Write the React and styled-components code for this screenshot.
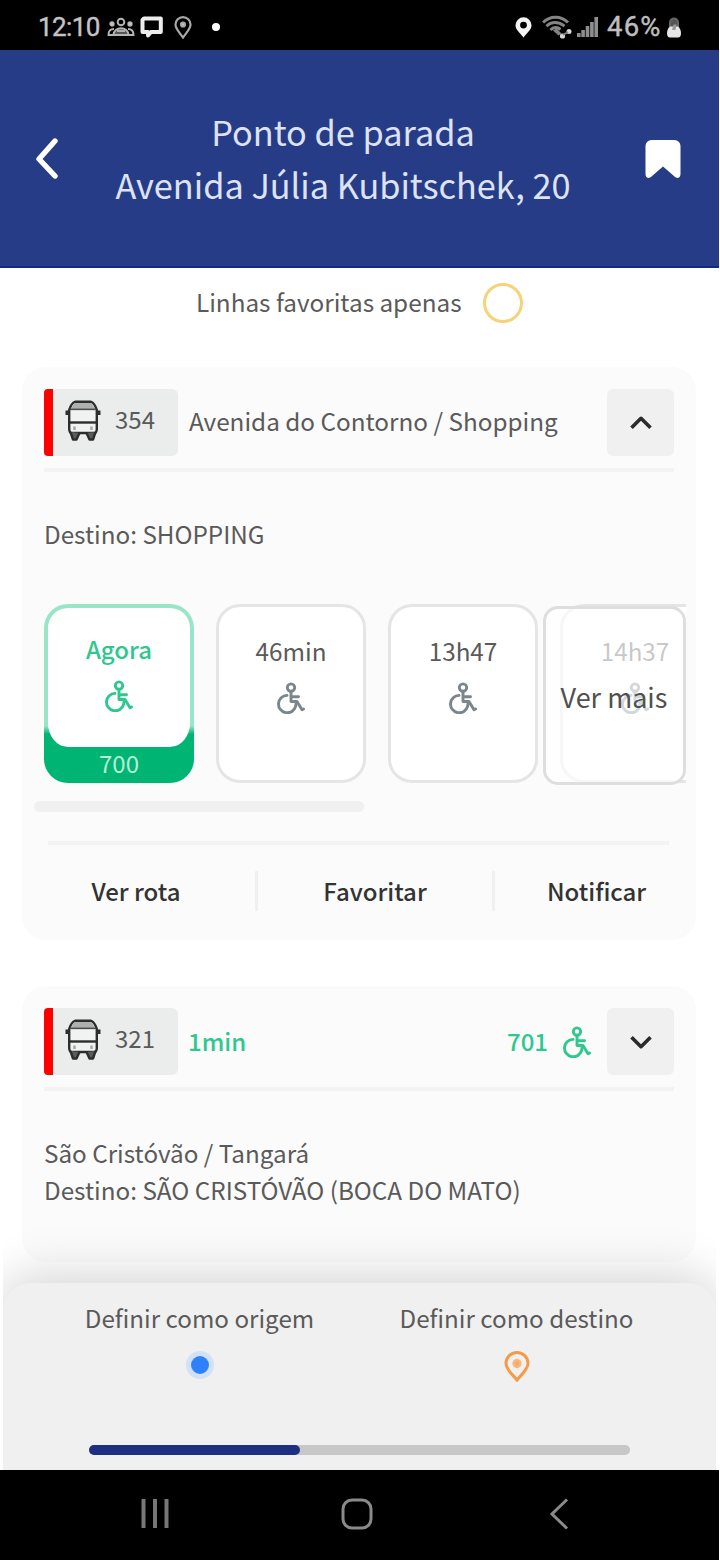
import React, { useState } from 'react'
import styled, { createGlobalStyle } from 'styled-components'

const green = "#2fc78f";

function WheelchairIcon({ color }) {
  return (
    <svg width="30" height="32" viewBox="0 0 30 32" fill="none" stroke={color} strokeWidth="2.900" strokeLinecap="round" strokeLinejoin="round">
      <circle cx="15" cy="5.600" r="3.700" />
      <path d="M15 9.500v10h6l5 8.300 1.600-.8" />
      <path d="M15.500 14.800h7" />
      <path d="M11 13.400a8.700 8.700 0 1 0 8.600 11l.6-3.400" />
    </svg>
  )
}

function BusIcon() {
  return (
    <svg width="36" height="42" viewBox="0 0 36 42" fill="none" stroke="#2c2e2e" strokeWidth="2.400" strokeLinejoin="round">
      <path d="M10 1.800h16c3 1 4.500 4 5.800 8V29c0 2-1 4-2 4H6.200c-1 0-2-2-2-4V9.800C5.500 5.800 7 2.800 10 1.800z" fill="#f1f3f2" />
      <path d="M10 3h16c1.500 1 2.800 3.500 3.500 5.500h-23C7.200 6.500 8.500 4 10 3z" fill="#adb0af" stroke="none" />
      <path d="M5 9.300h26" strokeWidth="1.700" stroke="#4a4c4c" />
      <path d="M4.200 22.500h27.600" />
      <path d="M2 10.500v4.500M34 10.500v4.500" strokeWidth="3" />
      <path d="M9.500 26.500v3.500M26.500 26.500v3.500" stroke="#a2a5a4" strokeWidth="2.400" />
      <path d="M5.500 32l2.500 7.500h3.500l3-6.500M30.500 32L28 39.500h-3.500l-3-6.500" fill="#5a5d5c" />
    </svg>
  )
}

function Chevron({ up }) {
  return (
    <svg width="24" height="16" viewBox="0 0 24 16" fill="none" stroke="#2b2b2b" strokeWidth="3.600" strokeLinejoin="round">
      <path d={up ? "M2.500 12.700L12 3.300l9.500 9.400" : "M2.500 3.300L12 12.700l9.500-9.400"} />
    </svg>
  )
}

function PeopleIcon() {
  return (
    <svg width="28" height="20" viewBox="0 0 28 20" fill="none" stroke="#b5b5b5" strokeWidth="1.900">
      <circle cx="14" cy="5" r="3.300" />
      <path d="M6.500 18c0-9 15-9 15 0z" fill="#555" />
      <path d="M10 14h8" />
      <circle cx="5" cy="7" r="1.700" fill="#ddd" />
      <circle cx="23" cy="7" r="1.700" fill="#ddd" />
      <path d="M7 12c-4 0-5.500 2-5.500 6H8M21 12c4 0 5.500 2 5.500 6H20" />
    </svg>
  )
}

function ChatIcon() {
  return (
    <svg width="23" height="23" viewBox="0 0 23 23">
      <path d="M4 2.500H20.800V16H11L8 19.500V16H2.500V4z" fill="none" stroke="#ededed" strokeWidth="4" strokeLinejoin="round" />
    </svg>
  )
}

function StatusWifi() {
  return (
    <svg width="30" height="24" viewBox="0 0 30 24" fill="none" stroke="#858585" strokeWidth="3">
      <path d="M1 7.500C8 .5 19 .5 26 7.500M4.500 11.200c5-5 12-5 18 0M8.500 15c3-3.200 7-3 10-.5" />
      <path d="M11 15.500l3.500-2 5 5-3 2z" fill="#858585" stroke="none" />
      <circle cx="20.500" cy="21" r="2.600" fill="#d8d8d8" stroke="none" />
      <circle cx="27" cy="16.500" r="2.500" fill="#d8d8d8" stroke="none" />
      <path d="M21 20l5-3" strokeWidth="2" />
    </svg>
  )
}

let departures = [
  { time: "46min" },
  { time: "13h47" },
  { time: "14h37" }
];

function LineHeader({ line, open, onToggle, children }) {
  return (
    <LineRow>
      <Badge>
        <BusIcon />
        <span>{line}</span>
      </Badge>
      {children}
      <Toggle type="button" onClick={onToggle}>
        <Chevron up={open} />
      </Toggle>
    </LineRow>
  )
}

function App() {
  let [favorites, setFavorites] = useState(false);
  let [firstOpen, setFirstOpen] = useState(true);
  let [secondOpen, setSecondOpen] = useState(false);

  return (
    <>
    <GlobalStyle />
    <Screen>
      <StatusBar>
        <Clock>12:10</Clock>
        <PeopleIcon />
        <ChatIcon />
        <svg width="18" height="23" viewBox="0 0 18 23" fill="none" stroke="#a8a8a8" strokeWidth="2.200">
          <path d="M9 21.500C5 16 1.500 13 1.500 8.600a7.500 7.500 0 0 1 15 0C16.500 13 13 16 9 21.500z" />
          <circle cx="9" cy="8.500" r="2" fill="#ccc" />
        </svg>
        <Dot />
        <StatusRight>
          <svg width="17" height="21" viewBox="0 0 17 21">
            <path fillRule="evenodd" d="M8.500 20.500C4 15 .5 12.500.5 8.300a8 8 0 0 1 16 0c0 4.200-3.500 6.700-8 12.200zM8.500 4.700a3.400 3.400 0 1 0 0 6.800 3.400 3.400 0 0 0 0-6.800z" fill="#f4f4f4" />
          </svg>
          <StatusWifi />
          <svg width="21" height="20" viewBox="0 0 21 20" fill="#8e8e8e">
            <path d="M0 16h3.600v4H0zM4.300 13h3.600v7H4.300zM8.700 9h3.600v11H8.700zM13.100 5h3.600v15h-3.600zM17.400 0h3.600v20h-3.600z" />
          </svg>
          <Battery>46%</Battery>
          <svg width="16" height="21" viewBox="0 0 16 21">
            <path d="M4 11V5.500a4 4 0 0 1 8 0V11" fill="#555" stroke="#666" strokeWidth="2" />
            <path d="M4 9.500h8c2 1.500 3 4 3 6.500 0 3-1 4.500-3 4.500H4c-2 0-3-1.500-3-4.500 0-2.500 1-5 3-6.500z" fill="#e6e6e6" />
            <path d="M7.500 7.500h3l-1 5.500H6z" fill="#999" />
          </svg>
        </StatusRight>
      </StatusBar>

      <Header>
        <svg width="24" height="42" viewBox="0 0 24 42" fill="none" stroke="#fff" strokeWidth="5.400" strokeLinecap="round" strokeLinejoin="round">
          <path d="M20 4L4 22l16 17" />
        </svg>
        <Title>Ponto de parada<br />Avenida Júlia Kubitschek, 20</Title>
        <svg width="36" height="40" viewBox="0 0 36 40">
          <path d="M6.500 2h23A6 6 0 0 1 35.500 8v28c0 4-3.500 5-6 2.600L18 28.500 6.500 38.600C4 41 .5 40 .5 36V8a6 6 0 0 1 6-6z" fill="#fff" />
        </svg>
      </Header>

      <FilterRow>
        <FilterText>Linhas favoritas apenas</FilterText>
        <Radio type="button" $on={favorites} onClick={() => setFavorites((state) => !state)} />
      </FilterRow>

      <Card>
        <LineHeader line="354" open={firstOpen} onToggle={() => setFirstOpen((state) => !state)}>
          <LineName>Avenida do Contorno / Shopping</LineName>
        </LineHeader>
        <Divider />
        <Destination>Destino: SHOPPING</Destination>
        <Times>
          <LiveTile>
            <LiveTop>
              <span>Agora</span>
              <WheelchairIcon color={green} />
            </LiveTop>
            <Vehicle>700</Vehicle>
          </LiveTile>
          {departures.map((item) => (
            <Tile key={item.time}>
              <span>{item.time}</span>
              <WheelchairIcon color="#7b868c" />
            </Tile>
          ))}
          <MoreButton>Ver mais</MoreButton>
        </Times>
        <ScrollThumb />
        <ThinDivider />
        <Actions>
          <Action $width={211}>Ver rota</Action>
          <Action $width={237}>Favoritar</Action>
          <Action $width={206}>Notificar</Action>
        </Actions>
      </Card>

      <Card $second>
        <LineHeader line="321" open={secondOpen} onToggle={() => setSecondOpen((state) => !state)}>
          <Eta>1min</Eta>
          <EtaVehicle><span>701</span> <WheelchairIcon color={green} /></EtaVehicle>
        </LineHeader>
        <Divider />
        <Destination>
          São Cristóvão / Tangará<br />
          Destino: SÃO CRISTÓVÃO (BOCA DO MATO)
        </Destination>
      </Card>

      <Sheet>
        <SheetOptions>
          <Option>
            Definir como origem
            <Origin />
          </Option>
          <Option>
            Definir como destino
            <svg width="26" height="31" viewBox="0 0 26 31" fill="none" stroke="#f79a45" strokeWidth="3">
              <path d="M13 29C8 23 2 18.500 2 12.300a11 10.800 0 0 1 22 0C24 18.500 18 23 13 29z" />
              <circle cx="13" cy="12.500" r="3.400" fill="#f5a964" stroke="#f9b77a" strokeWidth="2.500" />
            </svg>
          </Option>
        </SheetOptions>
        <Track><Progress /></Track>
      </Sheet>

      <NavBar>
        <svg width="30" height="32" viewBox="0 0 30 32" stroke="#777" strokeWidth="4">
          <path d="M3.500 1v29M15 1v29M26.500 1v29" />
        </svg>
        <svg width="32" height="32" viewBox="0 0 32 32" fill="none" stroke="#8a8a8a" strokeWidth="3">
          <rect x="2" y="2" width="28" height="28" rx="9" />
        </svg>
        <svg width="20" height="32" viewBox="0 0 20 32" fill="none" stroke="#8a8a8a" strokeWidth="3">
          <path d="M18 1.500L3 16l15 14.500" />
        </svg>
      </NavBar>
    </Screen>
    </>
  )
}

const GlobalStyle = createGlobalStyle`
*{
    box-sizing:border-box;
}
body{
    margin:0;
    background:#fff;
    font-family:"Noto Sans CJK SC","Noto Sans",sans-serif;
    color:#5a5a5a;
}
svg{
    display:block;
    flex-shrink:0;
}
button{
    font:inherit;
    border:0;
    padding:0;
}
`;

const Screen = styled.main`
width:719px;
height:1561px;
display:flex;
flex-direction:column;
overflow:hidden;
`;

const StatusBar = styled.div`
height:50px;
background:#000;
display:flex;
align-items:center;
padding:4px 37px 0 38px;
flex-shrink:0;

&>svg:nth-of-type(1){
    margin-left:7px;
}
&>svg:nth-of-type(2){
    margin-left:5px;
}
&>svg:nth-of-type(3){
    margin-left:11px;
}
`;
const Clock = styled.span`
width:62px;
font-family:Roboto,sans-serif;
font-size:26px;
line-height:30px;
letter-spacing:-0.6px;
color:#c4c4c4;
-webkit-text-stroke:0.4px #c4c4c4;
`;
const Battery = styled(Clock)`
width:56px;
margin-left:9px;
font-size:27.500px;
letter-spacing:1.2px;
white-space:nowrap;
color:#bdbdbd;
`;
const Dot = styled.i`
width:8px;
height:8px;
margin-left:20px;
border-radius:50%;
background:#fff;
`;
const StatusRight = styled.div`
display:flex;
align-items:center;
margin-left:auto;

&>svg:nth-of-type(1){
    margin-right:1px;
}
&>svg:nth-of-type(2){
    margin-left:9px;
}
&>svg:nth-of-type(3){
    margin-left:5px;
}
&>svg:nth-of-type(4){
    margin-left:3px;
}
`;

const Header = styled.header`
height:218px;
flex-shrink:0;
display:flex;
align-items:center;
justify-content:space-between;
padding:0 38px 0 35px;
background:#273c87;
border-bottom:2px solid #132b7b;
`;
const Title = styled.h1`
margin:0 7px 0 0;
padding-right:11px;
font-size:34.300px;
line-height:53px;
font-weight:400;
text-align:center;
white-space:nowrap;
color:#dde3f5;
`;

const FilterRow = styled.div`
height:70px;
flex-shrink:0;
display:flex;
align-items:center;
padding-left:196px;
white-space:nowrap;
`;
const FilterText = styled.span`
width:287px;
padding-bottom:4px;
font-size:24.300px;
`;
const Radio = styled.button`
width:40px;
height:40px;
border:3px solid #f6d27a;
border-radius:50%;
background:${(props) => (props.$on ? "#f6d27a" : "#fff")};
`;

const Card = styled.section`
width:674px;
height:${(props) => (props.$second ? "276px" : "573px")};
margin:${(props) => (props.$second ? "46px 0 0 22px" : "29px 0 0 22px")};
padding:22px;
flex-shrink:0;
border-radius:24px;
background:#fbfbfb;
`;
const LineRow = styled.div`
display:flex;
align-items:center;
height:67px;
white-space:nowrap;
`;
const Badge = styled.div`
width:134px;
height:67px;
display:flex;
align-items:center;
gap:14px;
padding:0 0 3px 12px;
border-left:9px solid #f00;
border-radius:4px 6px 6px 4px;
background:#ebedec;
font-size:24px;

&>span{
    padding-bottom:5px;
}
`;
const Toggle = styled.button`
width:67px;
height:67px;
margin-left:auto;
display:flex;
align-items:center;
justify-content:center;
border-radius:6px;
background:#f0f0f0;
`;
const LineName = styled.span`
margin-left:11px;
padding-bottom:4px;
font-size:24.300px;
`;
const Eta = styled.span`
margin-left:10px;
padding-bottom:3px;
font-size:24px;
font-weight:500;
color:${green};
`;
const EtaVehicle = styled.span`
display:flex;
align-items:center;
gap:14px;
margin-left:auto;
font-size:24px;
font-weight:500;
color:${green};

&>span{
    padding-bottom:3px;
}
&+${Toggle}{
    margin-left:15px;
}
`;
const Divider = styled.div`
height:4px;
margin-top:12px;
background:#f3f3f3;
`;
const Destination = styled.p`
margin:43px 0 0;
font-size:24.250px;
line-height:37px;
white-space:nowrap;
`;

const Times = styled.div`
position:relative;
display:flex;
gap:22px;
width:642px;
height:181px;
margin-top:52px;
overflow:hidden;
`;
const Tile = styled.div`
width:150px;
height:179px;
flex-shrink:0;
display:flex;
flex-direction:column;
align-items:center;
padding-top:27px;
border:3px solid #e5e5e5;
border-radius:24px;
background:#fff;
font-size:24.300px;
line-height:34px;

&>svg{
    margin-top:14px;
}
`;
const LiveTile = styled.div`
width:150px;
height:179px;
flex-shrink:0;
border-radius:24px;
overflow:hidden;
background:linear-gradient(#98e5c7 0 122px,#00b574 130px);
`;
const LiveTop = styled.div`
height:143px;
display:flex;
flex-direction:column;
align-items:center;
padding-top:24px;
border:solid transparent;
border-width:4px 4px 0;
border-radius:24px;
background:#fff padding-box;
font-size:24px;
font-weight:500;
line-height:34px;
color:${green};

&>svg{
    margin-top:14px;
}
`;
const Vehicle = styled.div`
font-size:24px;
line-height:32px;
text-align:center;
color:#b8efd9;
`;
/* sits over the tile that is scrolled halfway out */
const MoreButton = styled.button`
position:absolute;
right:0;
top:2px;
width:143px;
height:179px;
padding:2px 1px 0 0;
border:3px solid #dedede;
border-radius:15px;
background:rgba(255,255,255,0.67);
font-size:27px;
color:#505050;
`;
const ScrollThumb = styled.div`
width:330px;
height:11px;
margin:16px 0 0 -10px;
border-radius:6px;
background:#f0f0f0;
`;
const ThinDivider = styled.div`
height:4px;
margin:29px 5px 0 4px;
background:#f3f3f3;
`;
const Actions = styled.div`
display:flex;
margin-top:26px;
`;
const Action = styled.div`
width:${(props) => props.$width}px;
height:40px;
flex-shrink:0;
font-size:24px;
font-weight:500;
line-height:40px;
text-align:center;
color:#333;

&:not(:first-child){
    border-left:3px solid #f0f0f0;
}
&:first-child{
    padding-right:27px;
}
`;

const Sheet = styled.footer`
width:713px;
height:187px;
margin:21px 0 0 3px;
flex-shrink:0;
padding:17px 0 0;
border-radius:28px 28px 0 0;
background:#f0f0f0;
box-shadow:0 -8px 48px rgba(0,0,0,0.17);
clip-path:inset(-70px 0 0 0);
`;
const SheetOptions = styled.div`
display:flex;
padding-left:38px;
`;
const Option = styled.div`
width:317px;
height:110px;
display:flex;
flex-direction:column;
align-items:center;
gap:15px;
font-size:24.200px;
line-height:36px;
white-space:nowrap;
`;
const Origin = styled.i`
width:28px;
height:28px;
border:5px solid #d3e1f6;
border-radius:50%;
background:#2f80fb;
`;
const Track = styled.div`
width:541px;
height:10px;
margin:35px 0 0 86px;
border-radius:5px;
background:#c7c7c7;
`;
const Progress = styled.div`
width:211px;
height:10px;
border-radius:5px;
background:#1c2f80;
`;
const NavBar = styled.nav`
height:90px;
flex-shrink:0;
display:flex;
align-items:center;
padding:0 0 2px 140px;
background:#000;

&>svg:nth-of-type(2){
    margin-left:171px;
}
&>svg:nth-of-type(3){
    margin-left:176px;
}
`;

export default App
